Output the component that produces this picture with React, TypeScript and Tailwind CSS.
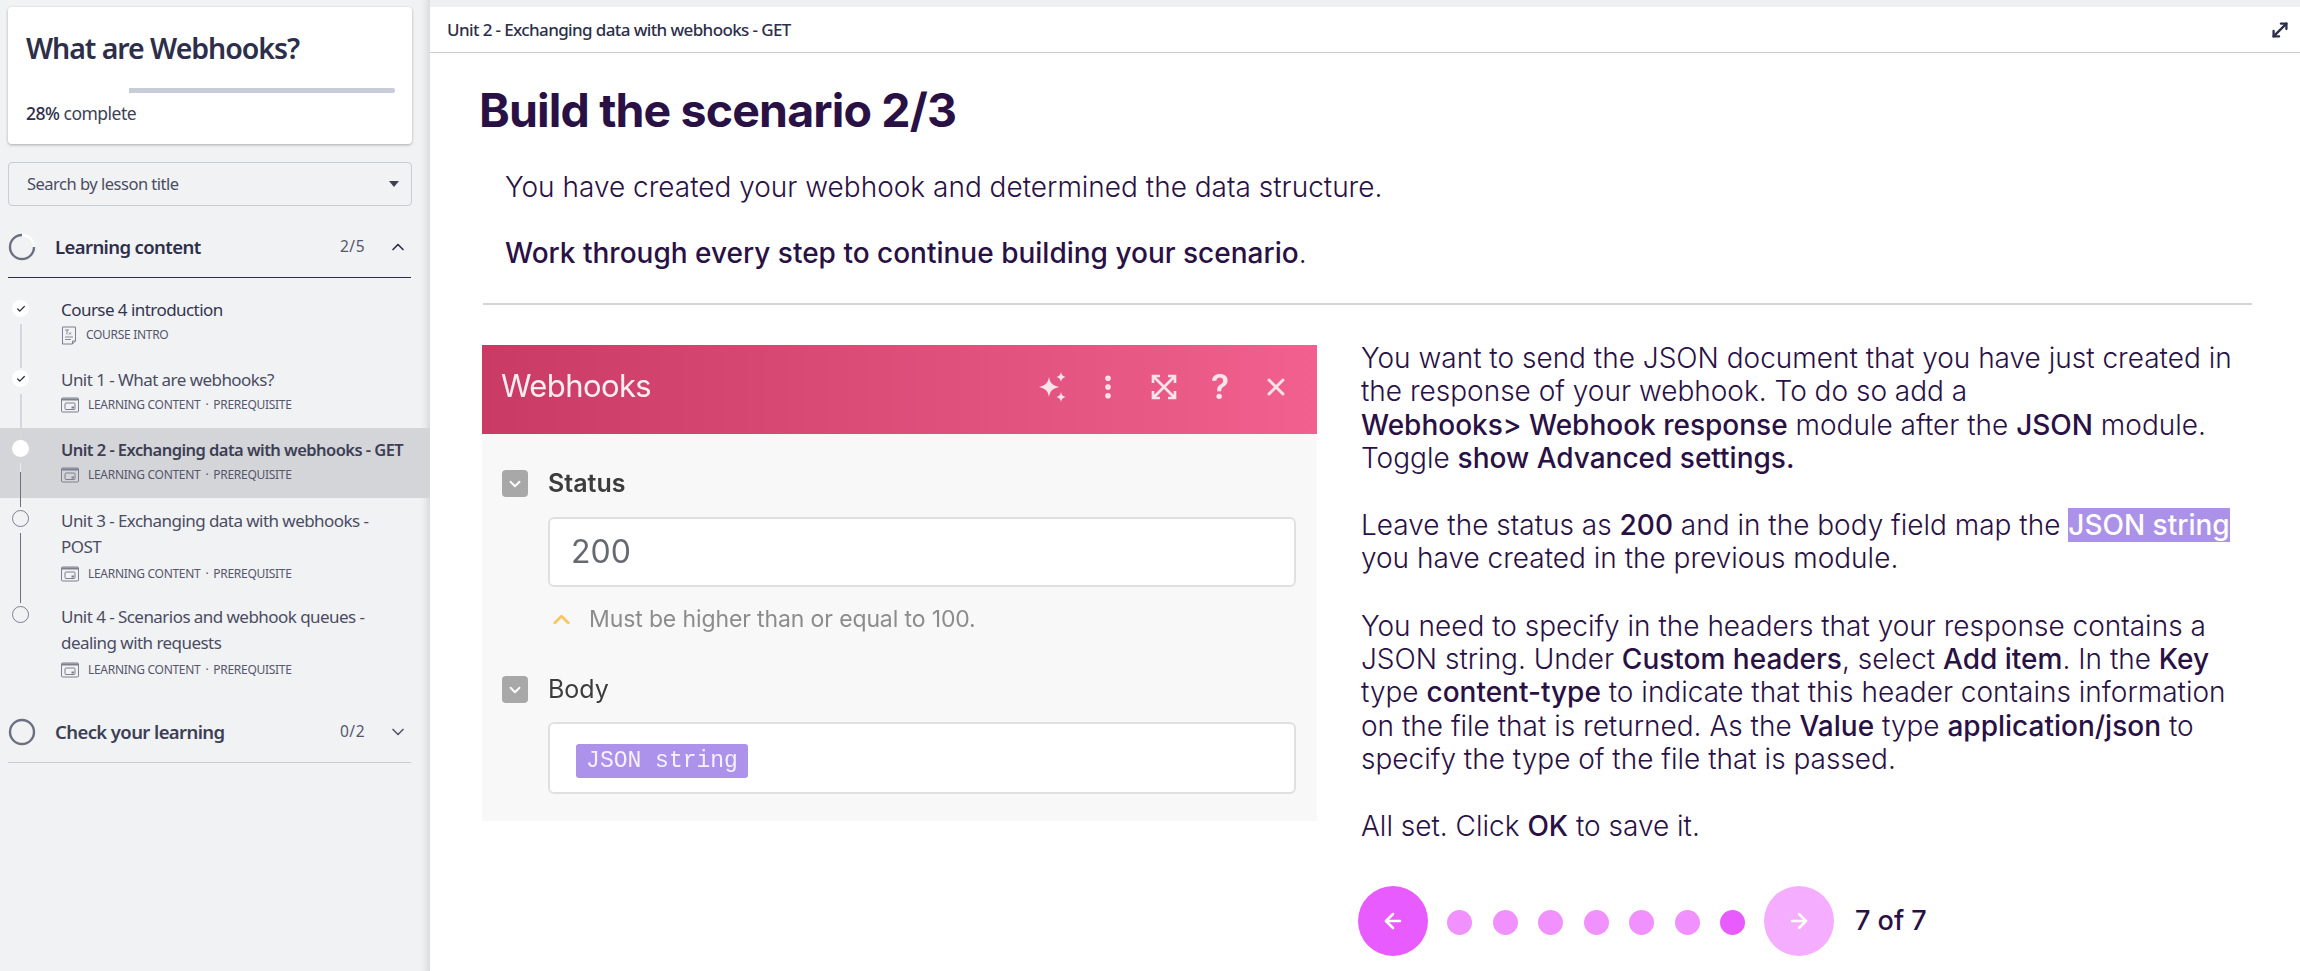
import { ChevronDown, ChevronUp, ArrowLeft, ArrowRight, Check, MoveDiagonal, EllipsisVertical, X } from 'lucide-react'

const sans = 'font-["Noto_Sans",sans-serif]'

function SlideIcon() {
  return (
    <svg width="18" height="16" viewBox="0 0 18 16" fill="none" stroke="#7c8090" strokeWidth="1" className="shrink-0">
      <rect x="0.5" y="1" width="17" height="14" rx="1" fill="none" />
      <path d="M1 2.5h16" strokeWidth="2" />
      <rect x="4" y="6" width="10" height="6.5" rx="1" />
      <rect x="10.5" y="9.5" width="2.5" height="2" fill="#7c8090" stroke="none" />
    </svg>
  )
}

function DocIcon() {
  return (
    <svg width="16" height="19" viewBox="0 0 16 19" fill="none" stroke="#7c8090" strokeWidth="1" className="shrink-0">
      <path d="M1.5 1h13v14l-3 3h-10z" />
      <path d="M11.5 18v-3h3" />
      <path d="M4 4h4M6 4v4.5M8 6.5l2 2M10 6.5l-2 2M4 11h8M4 13.5h6" strokeWidth="0.9" />
    </svg>
  )
}

interface Lesson {
  title: string
  kind: string
  state: 'done' | 'active' | 'todo'
  line?: 'light' | 'dark' | 'mixed'
}

const lessons: Lesson[] = [
  { title: 'Course 4 introduction', kind: 'COURSE INTRO', state: 'done', line: 'light' },
  { title: 'Unit 1 - What are webhooks?', kind: 'LEARNING CONTENT', state: 'done', line: 'light' },
  { title: 'Unit 2 - Exchanging data with webhooks - GET', kind: 'LEARNING CONTENT', state: 'active', line: 'mixed' },
  { title: 'Unit 3 - Exchanging data with webhooks -\nPOST', kind: 'LEARNING CONTENT', state: 'todo', line: 'dark' },
  { title: 'Unit 4 - Scenarios and webhook queues -\ndealing with requests', kind: 'LEARNING CONTENT', state: 'todo' },
]

function LessonRow({ lesson }: { lesson: Lesson }) {
  const { state } = lesson
  const intro = lesson.kind === 'COURSE INTRO'
  const twoLines = lesson.title.includes('\n')
  return (
    <div
      className={`relative flex pl-[61px] pr-[12px] ${twoLines ? 'pt-[10px] pb-[8px]' : 'pt-[9px] pb-[11px]'} ${
        state === 'active' ? 'bg-[#d4d5d9]' : ''
      }`}
    >
      <div
        className={`absolute left-[12px] top-[12px] flex h-[17px] w-[17px] items-center justify-center rounded-full ${
          state === 'todo' ? 'border border-[#7c8090]' : 'bg-white'
        }`}
      >
        {state === 'done' && <Check className="h-[10px] w-[10px] text-[#2b2b45]" strokeWidth={3} />}
      </div>
      {lesson.line === 'light' && <div className="absolute left-[20px] top-[36px] z-10 h-[44px] w-[2px] bg-[#d5d7dc]" />}
      {lesson.line === 'mixed' && (
        <>
          <div className="absolute left-[20px] top-[35px] h-[9px] w-[1px] bg-[#e8e9ec]" />
          <div className="absolute left-[20px] top-[44px] z-10 h-[35px] w-[1px] bg-[#6b7080]" />
        </>
      )}
      {lesson.line === 'dark' && <div className="absolute left-[20px] top-[35px] z-10 h-[70px] w-[1px] bg-[#6b7080]" />}
      <div className="min-w-0">
        <div
          className={`whitespace-pre-line leading-[26px] ${
            state === 'active'
              ? 'text-[16.5px] font-semibold tracking-[-0.55px] text-[#3d3f55]'
              : intro
                ? 'text-[17px] tracking-[-0.55px] text-[#33354f]'
                : 'text-[17px] tracking-[-0.55px] text-[#4b4d62]'
          }`}
        >
          {lesson.title}
        </div>
        <div className={`flex h-[24px] items-center gap-[9px] text-[12px] tracking-[-0.3px] text-[#55576b] ${twoLines ? 'mt-[2px]' : ''}`}>
          {intro ? <DocIcon /> : <SlideIcon />}
          <span className="flex gap-[5px]">
            <span>{lesson.kind}</span>
            {!intro && <span>·</span>}
            {!intro && <span>PREREQUISITE</span>}
          </span>
        </div>
      </div>
    </div>
  )
}

function SectionHeader({ title, count, open }: { title: string; count: string; open: boolean }) {
  return (
    <div className={`mx-[8px] flex h-[62px] items-center border-b ${open ? 'border-[#2d2f4a]' : 'border-[#c8ccd8]'}`}>
      <svg width="28" height="28" viewBox="0 0 28 28" fill="none" className="shrink-0">
        <circle cx="14" cy="14" r="12" stroke={open ? '#ffffff' : '#6b7080'} strokeWidth="2.4" />
        {open && <path d="M14 2A12 12 0 1 0 26 14" stroke="#6b7080" strokeWidth="2.4" />}
      </svg>
      <span className={`ml-[19px] text-[18.5px] font-semibold tracking-[-0.6px] ${open ? 'text-[#2d2f4a]' : 'text-[#3d3f55]'}`}>
        {title}
      </span>
      <span className="ml-auto text-[15.5px] tracking-[0.5px] text-[#55576b]">{count}</span>
      {open ? (
        <ChevronUp className="ml-[23px] mr-[3px] h-[20px] w-[20px] text-[#2d2f4a]" strokeWidth={2} />
      ) : (
        <ChevronDown className="ml-[23px] mr-[3px] h-[20px] w-[20px] text-[#55576b]" strokeWidth={2} />
      )}
    </div>
  )
}

function Sidebar() {
  return (
    <aside className={`relative z-10 w-[430px] shrink-0 bg-[#f1f2f4] pt-[7px] shadow-[inset_-10px_0_8px_-8px_rgba(0,0,0,0.14)] ${sans}`}>
      <div className="mx-[8px] h-[137px] w-[404px] rounded-[4px] bg-white px-[18px] pt-[22px] shadow-[0_1px_3px_rgba(0,0,0,0.3)]">
        <h1 className="text-[28.5px] font-semibold leading-[38px] tracking-[-1.05px] text-[#2d2f4a]">What are Webhooks?</h1>
        <div className="mt-[21px] ml-[103px] h-[5px] w-[266px] rounded-r-[2px] bg-[#c8ccd8]" />
        <div className="mt-[8px] text-[17.5px] leading-[24px] tracking-[-0.5px] text-[#3d3f55]">
          <span className="font-medium text-[#2d2f4a]">28%</span> complete
        </div>
      </div>
      <div className="mx-[8px] mt-[18px] flex h-[44px] w-[404px] items-center justify-between rounded-[4px] border border-[#c8ccd8] pl-[18px] pr-[12px] text-[16.5px] tracking-[-0.5px] text-[#4b4d62]">
        <span>Search by lesson title</span>
        <span className="h-0 w-0 border-x-[5px] border-t-[6px] border-x-transparent border-t-[#3d3f55]" />
      </div>
      <div className="mt-[10px] w-[419px]">
        <SectionHeader title="Learning content" count="2/5" open />
      </div>
      <div className="mt-[10px]">
        {lessons.map((l) => (
          <LessonRow key={l.title} lesson={l} />
        ))}
      </div>
      <div className="mt-[11px] w-[419px]">
        <SectionHeader title="Check your learning" count="0/2" open={false} />
      </div>
    </aside>
  )
}

function GreyToggle() {
  return (
    <span className="flex h-[27px] w-[26px] shrink-0 items-center justify-center rounded-[4px] bg-[#a8a8a8]">
      <ChevronDown className="h-[18px] w-[18px] text-white" strokeWidth={2.5} />
    </span>
  )
}

function ExpandBox() {
  return (
    <svg width="26" height="26" viewBox="0 0 26 26" fill="none" stroke="#fbe3ea" strokeWidth="2.6">
      <path d="M2 9V2h7M17 2h7v7M24 17v7h-7M9 24H2v-7M3 3l20 20M23 3L3 23" />
    </svg>
  )
}

function SparkleIcon() {
  return (
    <svg width="30" height="32" viewBox="0 0 30 32" fill="#fbe3ea">
      <path d="M12 6c1 6 3 8 10 10-7 2-9 4-10 10-1-6-3-8-10-10 7-2 9-4 10-10z" />
      <path d="M24 1c.6 3 1.500 4 4.500 5-3 1-3.900 2-4.500 5-.6-3-1.500-4-4.500-5 3-1 3.900-2 4.500-5z" />
      <path d="M24 21c.6 3 1.500 4 4.500 5-3 1-3.900 2-4.500 5-.6-3-1.500-4-4.500-5 3-1 3.900-2 4.500-5z" />
    </svg>
  )
}

// the module dialog that is a picture in the lesson
function ModulePicture() {
  const slot = 'flex w-[56px] justify-center'
  return (
    <div className='ml-[4px] h-[476px] w-[835px] shrink-0 bg-[#f8f8f8] font-["Inter",sans-serif] blur-[0.4px]'>
      <div className="flex h-[89px] items-center bg-gradient-to-r from-[#c93b65] to-[#f1608e] pb-[6px] pl-[19px] pr-[13px] text-[#fbe3ea]">
        <span className="text-[31px] tracking-[-0.6px] text-[#fdeef2]">Webhooks</span>
        <div className="ml-auto flex items-center">
          <span className={slot}><SparkleIcon /></span>
          <span className={slot}><EllipsisVertical className="h-[30px] w-[30px]" strokeWidth={2.5} /></span>
          <span className={slot}><ExpandBox /></span>
          <span className={`${slot} text-[34px] font-semibold leading-none`}>?</span>
          <span className={slot}><X className="h-[28px] w-[28px]" strokeWidth={2.5} /></span>
        </div>
      </div>
      <div className="flex items-center pl-[20px] pt-[36px]">
        <GreyToggle />
        <span className="ml-[20px] text-[25px] font-semibold leading-[27px] text-[#3c3c3c]">Status</span>
      </div>
      <div className="ml-[66px] mr-[21px] mt-[20px] flex h-[70px] items-center rounded-[6px] border-2 border-[#e0e0e0] bg-white pl-[21px] text-[32px] text-[#666a70]">
        200
      </div>
      <div className="ml-[69px] mt-[19px] flex h-[26px] items-center gap-[19px] text-[23px] tracking-[-0.12px] text-[#8c8c8c]">
        <ChevronUp className="-ml-[3px] h-[27px] w-[27px] text-[#fcc35b]" strokeWidth={2.5} />
        <span className="-ml-[5px]">Must be higher than or equal to 100.</span>
      </div>
      <div className="flex items-center pl-[20px] pt-[44px]">
        <GreyToggle />
        <span className="ml-[20px] text-[25px] leading-[27px] text-[#3c3c3c]">Body</span>
      </div>
      <div className="ml-[66px] mr-[21px] mt-[19px] flex h-[72px] items-center rounded-[6px] border-2 border-[#e0e0e0] bg-white pl-[26px] pt-[6px]">
        <span className='flex h-[34px] w-[172px] items-center justify-center rounded-[3px] bg-[#ac92ea] font-["Liberation_Mono",monospace] text-[23px] text-[#f6f1ff]'>
          JSON string
        </span>
      </div>
    </div>
  )
}

function Pager() {
  return (
    <div className="-ml-[3px] mt-[42px] flex items-center">
      <button type="button" className="flex h-[70px] w-[70px] items-center justify-center rounded-full bg-[#e85cff] text-white">
        <ArrowLeft className="h-[24px] w-[24px]" strokeWidth={2.5} />
      </button>
      <div className="ml-[19px] mt-[4px] flex gap-[20.5px]">
        {[0, 1, 2, 3, 4, 5, 6].map((i) => (
          <span key={i} className={`h-[25px] w-[25px] rounded-full ${i === 6 ? 'bg-[#e85cff]' : 'bg-[#f091ff]'}`} />
        ))}
      </div>
      <button type="button" className="ml-[19px] flex h-[70px] w-[70px] items-center justify-center rounded-full bg-[#f4adff] text-white">
        <ArrowRight className="h-[24px] w-[24px]" strokeWidth={2.5} />
      </button>
      <span className="ml-[21px] text-[27px] font-medium text-[#2a1145]">7 of 7</span>
    </div>
  )
}

export default function App() {
  return (
    <div className="flex h-[971px] w-[2300px] overflow-hidden bg-[#eeeff1]">
      <Sidebar />
      <main className="mt-[7px] flex min-w-0 flex-1 flex-col bg-white">
        <div className={`flex h-[46px] shrink-0 items-center justify-between border-b border-[#c8ccd8] pl-[17px] pr-[9px] text-[17px] font-medium tracking-[-0.62px] text-[#2d2f4a] ${sans}`}>
          <span>Unit 2 - Exchanging data with webhooks - GET</span>
          <MoveDiagonal className="h-[22px] w-[22px] text-[#2d2f4a]" strokeWidth={2.5} />
        </div>
        <div className='pl-[48px] pr-[48px] font-["Inter",sans-serif] text-[#2a1145]'>
          <h2 className="ml-[1px] mt-[29px] text-[46.5px] font-bold leading-[56px] tracking-[-0.85px]">Build the scenario 2/3</h2>
          <div className="pl-[27px] pt-[32px] text-[28px] font-light leading-[34px]">
            You have created your webhook and determined the data structure.
          </div>
          <div className="pl-[27px] pt-[32px] text-[28px] font-light leading-[34px]">
            <span className="font-medium">Work through every step to continue building your scenario</span>.
          </div>
          <div className="ml-[5px] mt-[33px] h-[2px] bg-[#d6d3d6]" />
          <div className="mt-[40px] flex">
            <ModulePicture />
            <div className="-mt-[3px] ml-[44px] w-[890px] text-[28px] font-light leading-[33.3px]">
              <p>
                You want to send the JSON document that you have just created in<br />the response of your webhook. To do so add a<br />
                <b className="font-medium">Webhooks&gt; Webhook response</b> module after the <b className="font-medium">JSON</b> module.<br />Toggle{' '}
                <b className="font-medium">show Advanced settings.</b>
              </p>
              <p className="mt-[34px]">
                Leave the status as <b className="font-medium">200</b> and in the body field map the{' '}
                <b className="bg-[#ab91e8] font-medium text-white">JSON string</b><br />you have created in the previous module.
              </p>
              <p className="mt-[34px]">
                You need to specify in the headers that your response contains a<br />JSON string. Under <b className="font-medium">Custom headers</b>, select{' '}
                <b className="font-medium">Add item</b>. In the <b className="font-medium">Key</b><br />type <b className="font-medium">content-type</b> to indicate
                that this header contains information<br />on the file that is returned. As the <b className="font-medium">Value</b> type{' '}
                <b className="font-medium">application/json</b> to<br />specify the type of the file that is passed.
              </p>
              <p className="mt-[34px]">
                All set. Click <b className="font-medium">OK</b> to save it.
              </p>
              <Pager />
            </div>
          </div>
        </div>
      </main>
    </div>
  )
}
